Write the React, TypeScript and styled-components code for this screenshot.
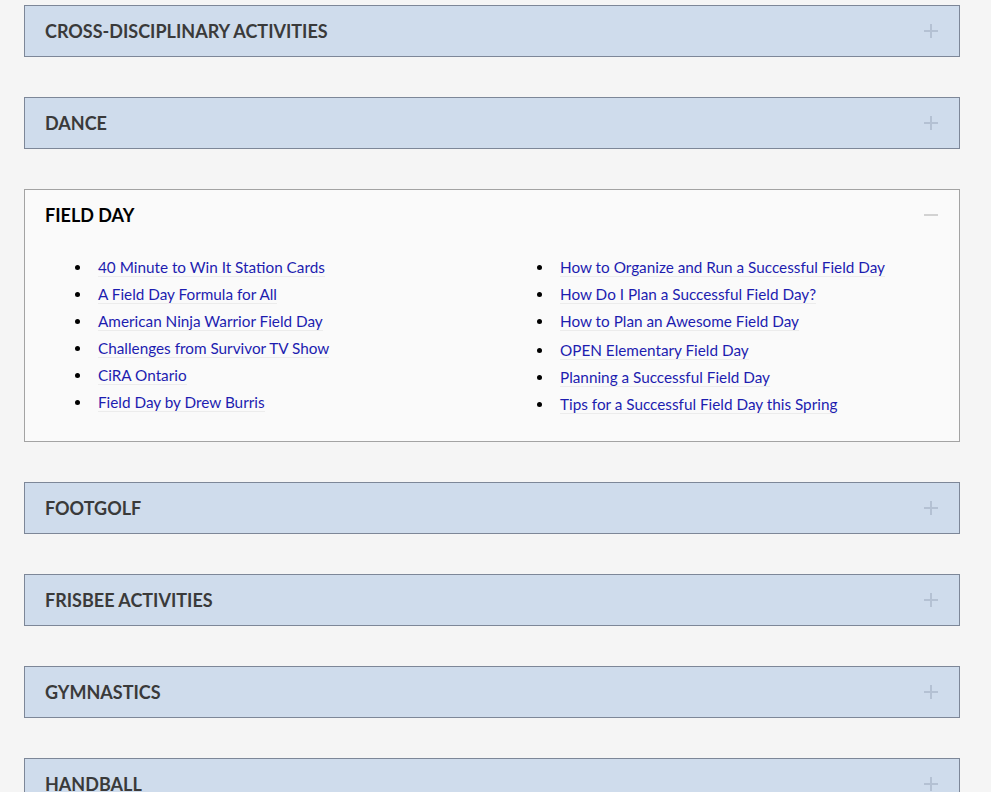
import { useState } from "react";
import styled, { createGlobalStyle } from "styled-components";

/**
 * Types
 */

interface Section {
  title: string;
  links: string[][];
}

/**
 * Data
 */

const sections: Section[] = [
  { title: "CROSS-DISCIPLINARY ACTIVITIES", links: [] },
  { title: "DANCE", links: [] },
  {
    title: "FIELD DAY",
    links: [
      [
        "40 Minute to Win It Station Cards",
        "A Field Day Formula for All",
        "American Ninja Warrior Field Day",
        "Challenges from Survivor TV Show",
        "CiRA Ontario",
        "Field Day by Drew Burris",
      ],
      [
        "How to Organize and Run a Successful Field Day",
        "How Do I Plan a Successful Field Day?",
        "How to Plan an Awesome Field Day",
        "OPEN Elementary Field Day",
        "Planning a Successful Field Day",
        "Tips for a Successful Field Day this Spring",
      ],
    ],
  },
  { title: "FOOTGOLF", links: [] },
  { title: "FRISBEE ACTIVITIES", links: [] },
  { title: "GYMNASTICS", links: [] },
  { title: "HANDBALL", links: [] },
];

/**
 * Styled Components
 */

const GlobalStyle = createGlobalStyle`
  body {
    margin: 0;
    background: #f5f5f5;
    font-family: "Lato", "Liberation Sans", sans-serif;
  }
`;

const Page = styled.div`
  display: flex;
  flex-direction: column;
  gap: 40px;
  padding: 5px 31px 40px 24px;
`;

const Panel = styled.div<{ $open: boolean }>`
  background: ${({ $open }) => ($open ? "#fafafa" : "#cfdcec")};
  border: 1px solid ${({ $open }) => ($open ? "#a3a3a3" : "#7d8798")};
`;

const Header = styled.button<{ $open: boolean }>`
  align-items: center;
  background: none;
  border: 0;
  color: ${({ $open }) => ($open ? "#000" : "#3a3a3a")};
  cursor: pointer;
  display: flex;
  font-family: inherit;
  font-size: 18px;
  font-weight: 700;
  height: 50px;
  justify-content: space-between;
  padding: 0 21px 1px 20px;
  text-align: left;
  width: 100%;
`;

const Toggle = styled.span<{ $open: boolean }>`
  height: 14px;
  position: relative;
  width: 14px;

  &::before,
  &::after {
    background: ${({ $open }) => ($open ? "#d2d2d2" : "#b4c1d3")};
    content: "";
    position: absolute;
  }

  &::before {
    height: 2px;
    left: 0;
    top: 6px;
    width: 14px;
  }

  &::after {
    display: ${({ $open }) => ($open ? "none" : "block")};
    height: 14px;
    left: 6px;
    top: 0;
    width: 2px;
  }
`;

const Body = styled.div`
  display: grid;
  grid-template-columns: 462px 1fr;
  padding: 14px 20px 23px 20px;
`;

const LinkList = styled.ul`
  list-style: disc;
  margin: 0;
  padding-left: 47px;
`;

const LinkItem = styled.li<{ $gap?: number }>`
  color: #000;
  font-size: 15.3px;
  line-height: 27px;
  margin-top: ${({ $gap }) => $gap ?? 0}px;
  padding-left: 6px;
`;

const Link = styled.a`
  border-bottom: 1px solid #ececec;
  color: #1d1db0;
  text-decoration: none;
`;

/**
 * App Component
 */

export default function App() {
  const [open, setOpen] = useState("FIELD DAY");

  return (
    <>
      <GlobalStyle />
      <Page>
        {sections.map((section) => {
          const isOpen = open === section.title;
          return (
            <Panel key={section.title} $open={isOpen}>
              <Header
                $open={isOpen}
                onClick={() => setOpen(isOpen ? "" : section.title)}
              >
                {section.title}
                <Toggle $open={isOpen} />
              </Header>
              {isOpen && (
                <Body>
                  {section.links.map((column, c) => (
                    <LinkList key={c}>
                      {column.map((link, i) => (
                        <LinkItem key={link} $gap={c === 1 && i === 3 ? 2 : 0}>
                          <Link href="#">{link}</Link>
                        </LinkItem>
                      ))}
                    </LinkList>
                  ))}
                </Body>
              )}
            </Panel>
          );
        })}
      </Page>
    </>
  );
}
